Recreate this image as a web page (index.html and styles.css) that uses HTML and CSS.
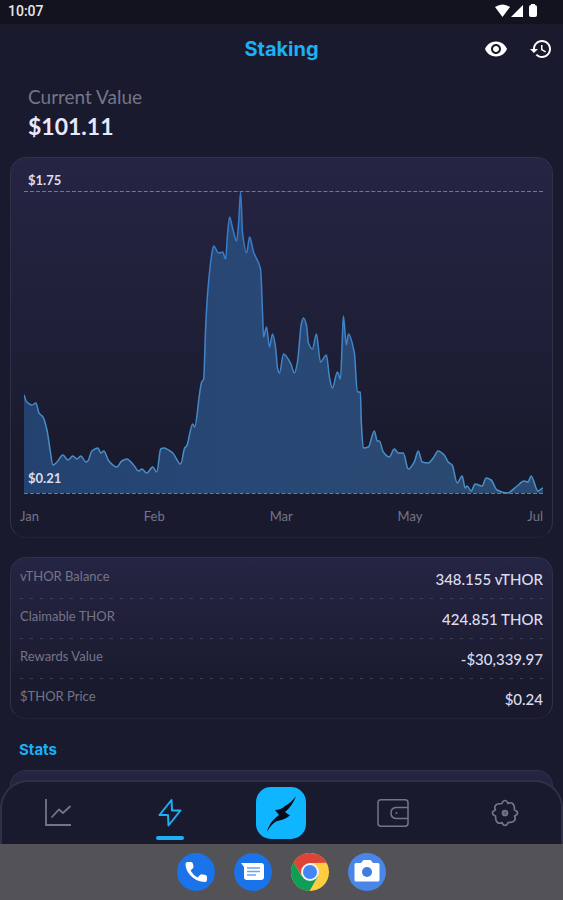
FILE: index.html
```
<!DOCTYPE html>
<html lang="en">
<head>
  <meta charset="UTF-8" />
  <meta name="viewport" content="width=device-width, initial-scale=1.0"/>
  <title>Staking</title>
  <link rel="stylesheet" href="styles.css">
</head>
<body>

  <div class="status-bar">
    <span>10:07</span>
    <svg width="43" height="14" viewBox="0 0 43 14" fill="#fff" aria-hidden="true">
      <path d="M0 3Q7.500 -2 15 3L7.500 13Z"/>
      <path d="M28 1V13H16Z"/>
      <path d="M36 1V0H40V1Q42 1 42 3V11Q42 13 40 13H36Q34 13 34 11V3Q34 1 36 1Z"/>
    </svg>
  </div>

  <header class="header">
    <h1>Staking</h1>
    <div class="header-actions">
      <button class="icon-button" aria-label="Hide values">
        <svg width="24" height="24" viewBox="0 0 24 24" fill="#fff"><path d="M12 4.500C7 4.500 2.730 7.610 1 12c1.730 4.390 6 7.500 11 7.500s9.270-3.110 11-7.500c-1.730-4.390-6-7.500-11-7.500zM12 17c-2.760 0-5-2.240-5-5s2.240-5 5-5 5 2.240 5 5-2.240 5-5 5zm0-8c-1.660 0-3 1.340-3 3s1.340 3 3 3 3-1.340 3-3-1.340-3-3-3z"/></svg>
      </button>
      <button class="icon-button" aria-label="History">
        <svg width="24" height="24" viewBox="0 0 24 24" fill="#fff"><path d="M13 3c-4.970 0-9 4.030-9 9H1l3.890 3.890.07.14L9 12H6c0-3.870 3.130-7 7-7s7 3.130 7 7-3.130 7-7 7c-1.930 0-3.680-.79-4.940-2.060l-1.420 1.420C8.270 19.990 10.510 21 13 21c4.970 0 9-4.030 9-9s-4.030-9-9-9zm-1 5v5l4.280 2.540.72-1.210-3.500-2.080V8H12z"/></svg>
      </button>
    </div>
  </header>

  <main class="content">
    <section class="current">
      <p class="current-label">Current Value</p>
      <p class="current-value">$101.11</p>
    </section>

    <section class="card chart-card">
      <div class="plot">
        <span class="chart-max">$1.75</span>
        <svg class="chart" viewBox="24 191 520 303" preserveAspectRatio="none" role="img" aria-label="Price chart">
          <defs>
            <linearGradient id="area" x1="0" y1="0" x2="1" y2="0">
              <stop offset="0" stop-color="#23426f"/>
              <stop offset="0.4" stop-color="#294775"/>
              <stop offset="1" stop-color="#2b4a70"/>
            </linearGradient>
            <linearGradient id="line" x1="0" y1="0" x2="0" y2="1">
              <stop offset="0" stop-color="#3577c8"/>
              <stop offset="1" stop-color="#4a91c8"/>
            </linearGradient>
          </defs>
          <path id="chart-area" fill="url(#area)"/>
          <path id="chart-line" class="chart-line" stroke="url(#line)"/>
          <path class="guide" d="M24 191.500H544M24 493.500H544"/>
        </svg>
        <span class="chart-min">$0.21</span>
      </div>
      <div class="months">
        <span>Jan</span><span>Feb</span><span>Mar</span><span>May</span><span>Jul</span>
      </div>
    </section>

    <dl class="card balances">
      <div class="row"><dt>vTHOR Balance</dt><dd>348.155 vTHOR</dd></div>
      <div class="row"><dt>Claimable THOR</dt><dd>424.851 THOR</dd></div>
      <div class="row"><dt>Rewards Value</dt><dd>-$30,339.97</dd></div>
      <div class="row"><dt>$THOR Price</dt><dd>$0.24</dd></div>
    </dl>

    <h2>Stats</h2>
    <section class="card stats-card"></section>
  </main>

  <div class="bottom">
    <nav class="tabs">
      <button class="tab" aria-label="Markets">
        <svg width="28" height="28" viewBox="0 0 28 28" fill="none" stroke="#757589" stroke-width="1.800"><path d="M2 0V26H27M7.500 18.500L15 10.500L19 14L26.500 7"/></svg>
      </button>
      <button class="tab active" aria-label="Staking">
        <svg width="28" height="28" viewBox="0 0 28 28" fill="none" stroke="#1cb0f5" stroke-width="2" stroke-linejoin="round"><path d="M15.500 1L3.500 16H12L12.500 26.500L24.500 11.500H16Z"/></svg>
      </button>
      <button class="tab" aria-label="Swap">
        <svg width="52" height="53" viewBox="0 0 52 53"><rect x="1" width="50" height="52" rx="15" fill="#10b5ff"/><path fill="#050c18" d="M41 9C39 15 35 21 30 25L35 28.500Q29 33 22 34Q16 37 12 45Q14 36 22 29.500L24 28L20 23Q26 23 30 19Q37 15 41 9Z"/></svg>
      </button>
      <button class="tab" aria-label="Wallet">
        <svg width="32" height="28" viewBox="0 0 32 28" fill="none" stroke="#757589" stroke-width="1.500"><rect x="1" y="0.800" width="30" height="26.500" rx="3"/><path d="M31 8.500H19Q14 9 14 14T19 19.500H31"/><circle cx="19.500" cy="14" r="1" fill="#757589" stroke="none"/></svg>
      </button>
      <button class="tab" aria-label="Settings">
        <svg width="28" height="28" viewBox="0 0 28 28" fill="none" stroke="#757589" stroke-width="1.700" stroke-linejoin="round"><path d="M11 4.500Q12 1.500 14 1.500T17 4.500Q19.500 3 21.500 4.500T23.500 11Q26.500 12 26.500 14T23.500 17Q25 19.500 23.500 21.500T17 23.500Q16 26.500 14 26.500T11 23.500Q8.500 25 6.500 23.500T4.500 17Q1.500 16 1.500 14T4.500 11Q3 8.500 4.500 6.500T11 4.500Z"/><circle cx="14" cy="14" r="2.500" fill="#5c5c70"/></svg>
      </button>
    </nav>

    <div class="dock">
      <button class="app" aria-label="Phone">
        <svg width="38" height="38" viewBox="0 0 38 38"><circle cx="19" cy="19" r="19" fill="#1a73e8"/><path fill="#fff" d="M8.500 11Q8.500 9 10.500 9H14Q15.500 9 16 11L16.500 14Q16.500 15 13.500 17.500Q16 22 20.500 24.500L23 22Q24 21 25.500 21.500L28.500 22Q30 22.500 30 24V27Q30 29 28 29Q19 28.500 13.500 22.500Q8.500 17 8.500 11Z"/></svg>
      </button>
      <button class="app" aria-label="Messages">
        <svg width="38" height="38" viewBox="0 0 38 38"><circle cx="19" cy="19" r="19" fill="#1a73e8"/><path fill="#fff" d="M7 10H27Q30 10 30 13V24Q30 27 27 27H13Q10 27 10 24V14Z"/><path stroke="#6aa4f5" stroke-width="1.500" d="M13 15H26M13 18.500H26M13 22H22"/></svg>
      </button>
      <button class="app" aria-label="Chrome">
        <svg width="38" height="38" viewBox="0 0 38 38"><circle cx="19" cy="19" r="19" fill="#ffcd40"/><path fill="#db4437" d="M2.500 9.500A19 19 0 0 1 35.500 9.800L19 10L11 23Z"/><path fill="#0f9d58" d="M2.500 9.500A19 19 0 0 0 18.500 38L26.800 23.500L19 19L11 23.500Z"/><circle cx="19" cy="19" r="9" fill="#f1f1f1"/><circle cx="19" cy="19" r="7" fill="#4285f4"/></svg>
      </button>
      <button class="app" aria-label="Camera">
        <svg width="38" height="38" viewBox="0 0 38 38"><circle cx="19" cy="19" r="19" fill="#4a85e8"/><path fill="#fff" d="M8 10H13L15.500 7H22.500L25 10H30Q31.500 10 31.500 11.500V27Q31.500 28.500 30 28.500H8Q6.500 28.500 6.500 27V11.500Q6.500 10 8 10Z"/><circle cx="19" cy="19" r="5" fill="#3f7de0"/></svg>
      </button>
    </div>
  </div>

  <script src="chart.js"></script>
</body>
</html>
```
FILE: styles.css
```
:root {
  --bg: #1a1a2e;
  --blue: #1cb0f5;
  --muted: #757589;
  --text: #dcdcee;
  --border: #303048;
}
* {
  box-sizing: border-box;
  margin: 0;
  padding: 0;
}
body {
  height: 100vh;
  overflow: hidden;
  display: flex;
  flex-direction: column;
  background: var(--bg);
  color: var(--text);
  font-family: Lato, sans-serif;
}
button {
  background: none;
  border: none;
  cursor: pointer;
}
svg {
  display: block;
}
.status-bar {
  display: flex;
  justify-content: space-between;
  align-items: center;
  height: 24px;
  padding: 0 25px 2px 8px;
  background: #13131f;
  color: #e6e6e6;
  font: 500 14px Roboto, sans-serif;
}
.header {
  display: grid;
  grid-template-columns: 1fr auto 1fr;
  align-items: center;
  height: 50px;
  padding: 0 10px;
}
h1, h2 {
  color: var(--blue);
  font-family: Inter, sans-serif;
  font-weight: 700;
}
h1 {
  grid-column: 2;
  font-size: 20px;
}
.header-actions {
  display: flex;
  justify-content: flex-end;
  gap: 21px;
}
.content {
  flex: 1;
  min-height: 0;
  overflow: hidden;
  padding: 0 10px;
}
.current {
  padding: 11px 18px 14px;
}
.current-label {
  color: var(--muted);
  font-size: 19px;
  line-height: 24px;
}
.current-value {
  color: #e8e8fa;
  font-size: 23px;
  font-weight: 700;
  line-height: 34px;
}
.card {
  border: 1px solid var(--border);
  border-bottom-color: #222238;
  border-radius: 16px;
  background: linear-gradient(#252544, #1a1a2e 80%);
}
.chart-card {
  padding: 11px 9px;
}
.plot {
  position: relative;
  padding-left: 4px;
}
.chart-max, .chart-min {
  display: block;
  padding-left: 4px;
  font-size: 13px;
  font-weight: 700;
  line-height: 22px;
}
.chart-min {
  position: absolute;
  left: 4px;
  bottom: 5px;
}
.chart {
  width: 100%;
  height: 303px;
}
.chart-line {
  fill: none;
  stroke-width: 1.5;
  stroke-linejoin: round;
}
.guide {
  fill: none;
  stroke: #77778b;
  stroke-width: 1;
  stroke-dasharray: 4 2;
}
.months {
  display: flex;
  justify-content: space-between;
  padding-top: 12px;
  color: var(--muted);
  font-size: 13px;
  line-height: 20px;
}
.balances {
  margin-top: 19px;
  padding: 0 9px;
}
.row {
  display: flex;
  justify-content: space-between;
  height: 40px;
  padding-top: 8px;
}
.row + .row {
  background: repeating-linear-gradient(90deg, #3d3d55 0 3px, transparent 3px 10px) top / 100% 1px no-repeat;
}
dt {
  color: var(--muted);
  font-size: 13px;
  line-height: 20px;
}
dd {
  padding-top: 2px;
  font-size: 15px;
  font-weight: 500;
  line-height: 22px;
}
h2 {
  padding: 21px 9px 10px;
  font-size: 15px;
  line-height: 20px;
}
.stats-card {
  height: 120px;
}
.tabs {
  display: flex;
  height: 64px;
  margin-top: -64px;
  position: relative;
  border: 2px solid var(--border);
  border-bottom: none;
  border-radius: 28px 28px 0 0;
  background: var(--bg);
}
.tab {
  position: relative;
  flex: 1;
  display: flex;
  align-items: center;
  justify-content: center;
}
.tab.active::after {
  content: "";
  position: absolute;
  bottom: 4px;
  width: 28px;
  height: 4px;
  border-radius: 2px;
  background: var(--blue);
}
.dock {
  display: flex;
  align-items: center;
  justify-content: center;
  gap: 19px;
  height: 56px;
  background: #535357;
}
```
FILE: chart.js
```
const points = [
  [24,395],[26,401],[32,405],[36,403],[39,413],[43,417],[47,430],[50,449],[53,465],[57,462],
  [63,455],[68,460],[73,456],[77,459],[81,456],[86,462],[88,461],[92,451],[98,448],[101,453],
  [104,451],[109,461],[117,467],[122,461],[127,459],[133,464],[139,471],[142,469],[147,473],[153,467],
  [157,472],[161,449],[164,448],[173,453],[181,464],[185,448],[187,446],[193,424],[195,427],[200,393],
  [202,382],[204,379],[206,327],[208,293],[212,255],[214,246],[219,253],[223,252],[226,259],[228,233],
  [230,217],[233,228],[237,241],[239,223],[241,192],[243,233],[247,253],[250,237],[254,252],[261,269],
  [263,313],[264,337],[267,327],[270,347],[273,334],[276,347],[278,368],[280,373],[284,354],[291,363],
  [295,373],[298,362],[302,323],[304,318],[307,325],[309,343],[313,349],[317,334],[321,362],[327,355],
  [330,377],[333,388],[338,372],[341,379],[343,337],[344,316],[347,345],[349,334],[355,353],[358,392],
  [361,392],[362,423],[364,448],[369,447],[375,431],[378,441],[380,441],[384,452],[390,457],[395,449],
  [399,453],[404,453],[409,469],[415,462],[419,451],[423,462],[429,463],[434,458],[439,451],[445,455],
  [449,462],[453,465],[458,483],[463,476],[466,488],[468,486],[472,491],[476,484],[483,486],[487,478],
  [492,480],[498,490],[508,493],[518,486],[525,481],[529,482],[532,476],[539,491],[544,488]
];

// slope at a point, flat on every peak and dip so the curve never overshoots
function slope(i) {
  if (i === 0 || i === points.length - 1) return 0;
  const [a, b, c] = points.slice(i - 1, i + 2);
  const before = (b[1] - a[1]) / (b[0] - a[0]);
  const after = (c[1] - b[1]) / (c[0] - b[0]);
  if (before * after <= 0) return 0;
  return 2 * before * after / (before + after);
}

let line = `M${points[0][0]} ${points[0][1]}`;
for (let i = 1; i < points.length; i++) {
  const [x0, y0] = points[i - 1];
  const [x1, y1] = points[i];
  const d = (x1 - x0) / 3;
  line += `C${x0 + d} ${y0 + slope(i - 1) * d} ${x1 - d} ${y1 - slope(i) * d} ${x1} ${y1}`;
}
document.getElementById('chart-line').setAttribute('d', line);
document.getElementById('chart-area').setAttribute('d', line + 'V493H24Z');
```
